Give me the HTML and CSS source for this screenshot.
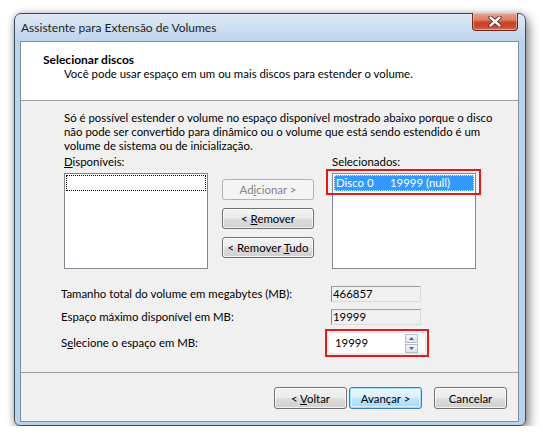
FILE: index.html
```html
<!DOCTYPE html>
<html lang="pt">
<head>
<meta charset="utf-8">
<title>Assistente para Extensão de Volumes</title>
<link rel="stylesheet" href="styles.css">
</head>
<body>
<div class="window">
  <div class="titlebar">
    <span class="title">Assistente para Extensão de Volumes</span>
    <button class="close" aria-label="Fechar">
      <svg width="14" height="11" viewBox="0 0 14 11">
        <path d="M2.5 1.5 L11.5 9.5 M11.5 1.5 L2.5 9.5" stroke="#5a1f16" stroke-width="4.2" stroke-linecap="round"/>
        <path d="M2.5 1.5 L11.5 9.5 M11.5 1.5 L2.5 9.5" stroke="#ffffff" stroke-width="2.4" stroke-linecap="round"/>
      </svg>
    </button>
  </div>
  <div class="client">
    <div class="header">
      <div class="h-title">Selecionar discos</div>
      <div class="h-sub">Você pode usar espaço em um ou mais discos para estender o volume.</div>
    </div>
    <div class="body">
      <p class="info">Só é possível estender o volume no espaço disponível mostrado abaixo porque o disco<br>não pode ser convertido para dinâmico ou o volume que está sendo estendido é um<br>volume de sistema ou de inicialização.</p>
      <div class="lists">
        <div class="col">
          <div class="lbl"><u>D</u>isponíveis:</div>
          <div class="listbox"><div class="item focus-empty"></div></div>
        </div>
        <div class="mid">
          <button class="btn disabled">Ad<u>i</u>cionar &gt;</button>
          <button class="btn">&lt; <u>R</u>emover</button>
          <button class="btn">&lt; Remover <u>T</u>udo</button>
        </div>
        <div class="col">
          <div class="lbl">Selecionados:</div>
          <div class="listbox">
            <div class="item selected"><span class="c1">Disco 0</span><span>19999 (null)</span></div>
          </div>
          <div class="mark mark-list"></div>
        </div>
      </div>
      <div class="fields">
        <div class="row">
          <span class="flabel">Tamanho total do volume em megabytes (MB):</span>
          <span class="ro">466857</span>
        </div>
        <div class="row">
          <span class="flabel">Espaço máximo disponível em MB:</span>
          <span class="ro">19999</span>
        </div>
        <div class="row row-spin">
          <span class="flabel">S<u>e</u>lecione o espaço em MB:</span>
          <div class="spin">
            <span class="spin-val">19999</span>
            <div class="arrows">
              <span class="arr"><svg width="5" height="3" viewBox="0 0 5 3"><path d="M0 3 L2.5 0 L5 3Z" fill="#4d6185"/></svg></span>
              <span class="arr"><svg width="5" height="3" viewBox="0 0 5 3"><path d="M0 0 L2.5 3 L5 0Z" fill="#4d6185"/></svg></span>
            </div>
          </div>
        </div>
      </div>
    </div>
    <div class="footer">
      <button class="btn fbtn">&lt; <u>V</u>oltar</button>
      <button class="btn fbtn default">Avançar &gt;</button>
      <button class="btn fbtn cancel">Cancelar</button>
    </div>
  </div>
</div>
</body>
</html>
```

FILE: styles.css
```css
* { box-sizing: border-box; }
html, body { margin: 0; padding: 0; background: #ffffff; }
body {
  font-family: "Lato", "Open Sans", sans-serif;
  font-size: 11.4px;
  line-height: 14px;
  color: #000;
}
u { text-decoration: underline; text-underline-offset: 1px; }

.window {
  margin: 13px 0 0 14px;
  width: 512px;
  height: 413px;
  border: 1px solid #3d4b5f;
  border-radius: 7px 7px 6px 6px;
  background: linear-gradient(180deg, #dfe9f5 0px, #cddef1 14px, #bdd2eb 28px, #bcd1ea 100%);
  padding: 0 6px 3px 5px;
  box-shadow: 3px 5px 12px rgba(0,0,0,0.45), 0 0 6px rgba(0,0,0,0.2);
  display: flex;
  flex-direction: column;
}
.titlebar {
  height: 27px;
  display: flex;
  align-items: flex-start;
  justify-content: space-between;
}
.title {
  margin: 7px 0 0 1px;
  font-size: 12px;
  color: #1e1e1e;
}
.close {
  margin: -1px 1px 0 0;
  width: 46px;
  height: 18px;
  padding: 0;
  border: 1px solid #6e2a1f;
  border-top: none;
  border-radius: 0 0 4px 4px;
  background: linear-gradient(180deg, #e9a493 0%, #dc7f6b 40%, #c8452d 55%, #c94a30 80%, #d9744f 100%);
  box-shadow: inset 0 0 0 1px rgba(255,220,210,0.45);
  display: flex;
  align-items: center;
  justify-content: center;
}

.client {
  height: 381px;
  border: 1px solid #7b8ea8;
  background: #f0f0f0;
  display: flex;
  flex-direction: column;
}
.header {
  height: 59px;
  background: #ffffff;
  border-bottom: 1px solid #a0a0a0;
  padding-top: 11px;
}
.h-title {
  margin-left: 22px;
  font-weight: bold;
  font-size: 12px;
}
.h-sub { margin-left: 43px; }

.body { padding: 10px 0 0 43px; }
.info { margin: 0; white-space: nowrap; }
.lists {
  display: flex;
  margin-top: 2px;
  align-items: flex-start;
}
.col { width: 144px; position: relative; }
.lbl { height: 14px; margin-bottom: 4px; }
.listbox {
  height: 96px;
  background: #fff;
  border: 1px solid #828790;
  padding: 1px;
}
.item { height: 16px; display: flex; align-items: center; }
.focus-empty { border: 1px dotted #000; }
.selected {
  background: #3399ff;
  color: #fff;
  border: 1px dotted #c9e3ff;
  padding-left: 1px;
}
.c1 { width: 54px; }
.mid {
  width: 92px;
  margin: 24px 18px 0 14px;
  display: flex;
  flex-direction: column;
  gap: 8px;
}
.mark {
  position: absolute;
  border: 2px solid #e21a1a;
}
.mark-list { left: -6px; top: 14px; width: 155px; height: 26px; }

.btn {
  font-family: inherit;
  font-size: 11.4px;
  height: 21px;
  padding: 0;
  border: 1px solid #707070;
  border-radius: 3px;
  background: linear-gradient(180deg, #f2f2f2 0%, #ebebeb 48%, #dddddd 52%, #cfcfcf 100%);
  box-shadow: inset 0 0 0 1px rgba(255,255,255,0.75);
  color: #000;
  white-space: nowrap;
}
.btn.disabled {
  border-color: #adb2b5;
  background: #f4f4f4;
  color: #838383;
  box-shadow: none;
}

.fields { margin: 17px 0 0 -3px; }
.row { display: flex; align-items: center; height: 16px; margin-bottom: 7px; }
.flabel { width: 270px; }
.ro {
  width: 90px;
  height: 16px;
  border: 1px solid #dadada;
  border-top-color: #a0a0a0;
  border-left-color: #8a8a8a;
  padding-left: 1px;
  line-height: 14px;
  background: #f0f0f0;
}
.row-spin { height: 22px; margin-top: 5px; }
.spin {
  position: relative;
  margin-left: -3px;
  width: 98px;
  height: 22px;
  background: #fff;
  border: 1px solid #e6e6e6;
  outline: 2px solid #e21a1a;
  outline-offset: 1px;
  display: flex;
  align-items: center;
  justify-content: space-between;
  padding: 0 7px 0 6px;
}
.arrows { display: flex; flex-direction: column; gap: 1px; }
.arr {
  width: 13px;
  height: 9px;
  border: 1px solid #b3bccb;
  background: linear-gradient(180deg, #f5f7fa, #dde3ec);
  display: flex;
  align-items: center;
  justify-content: center;
}

.footer {
  margin-top: auto;
  height: 49px;
  border-top: 1px solid #a0a0a0;
  display: flex;
  justify-content: flex-end;
  align-items: flex-start;
  padding: 14px 11px 0 0;
}
.fbtn { width: 73px; height: 22px; }
.fbtn + .fbtn { margin-left: 2px; }
.fbtn.cancel { margin-left: 12px; }
.fbtn.default {
  border-color: #3c7fb1;
  box-shadow: inset 0 0 0 1px #9fdcf9, inset 0 0 0 2px rgba(255,255,255,0.5);
  background: linear-gradient(180deg, #eaf6fd 0%, #d9f0fc 48%, #bee6fd 52%, #a7d9f5 100%);
}
```
